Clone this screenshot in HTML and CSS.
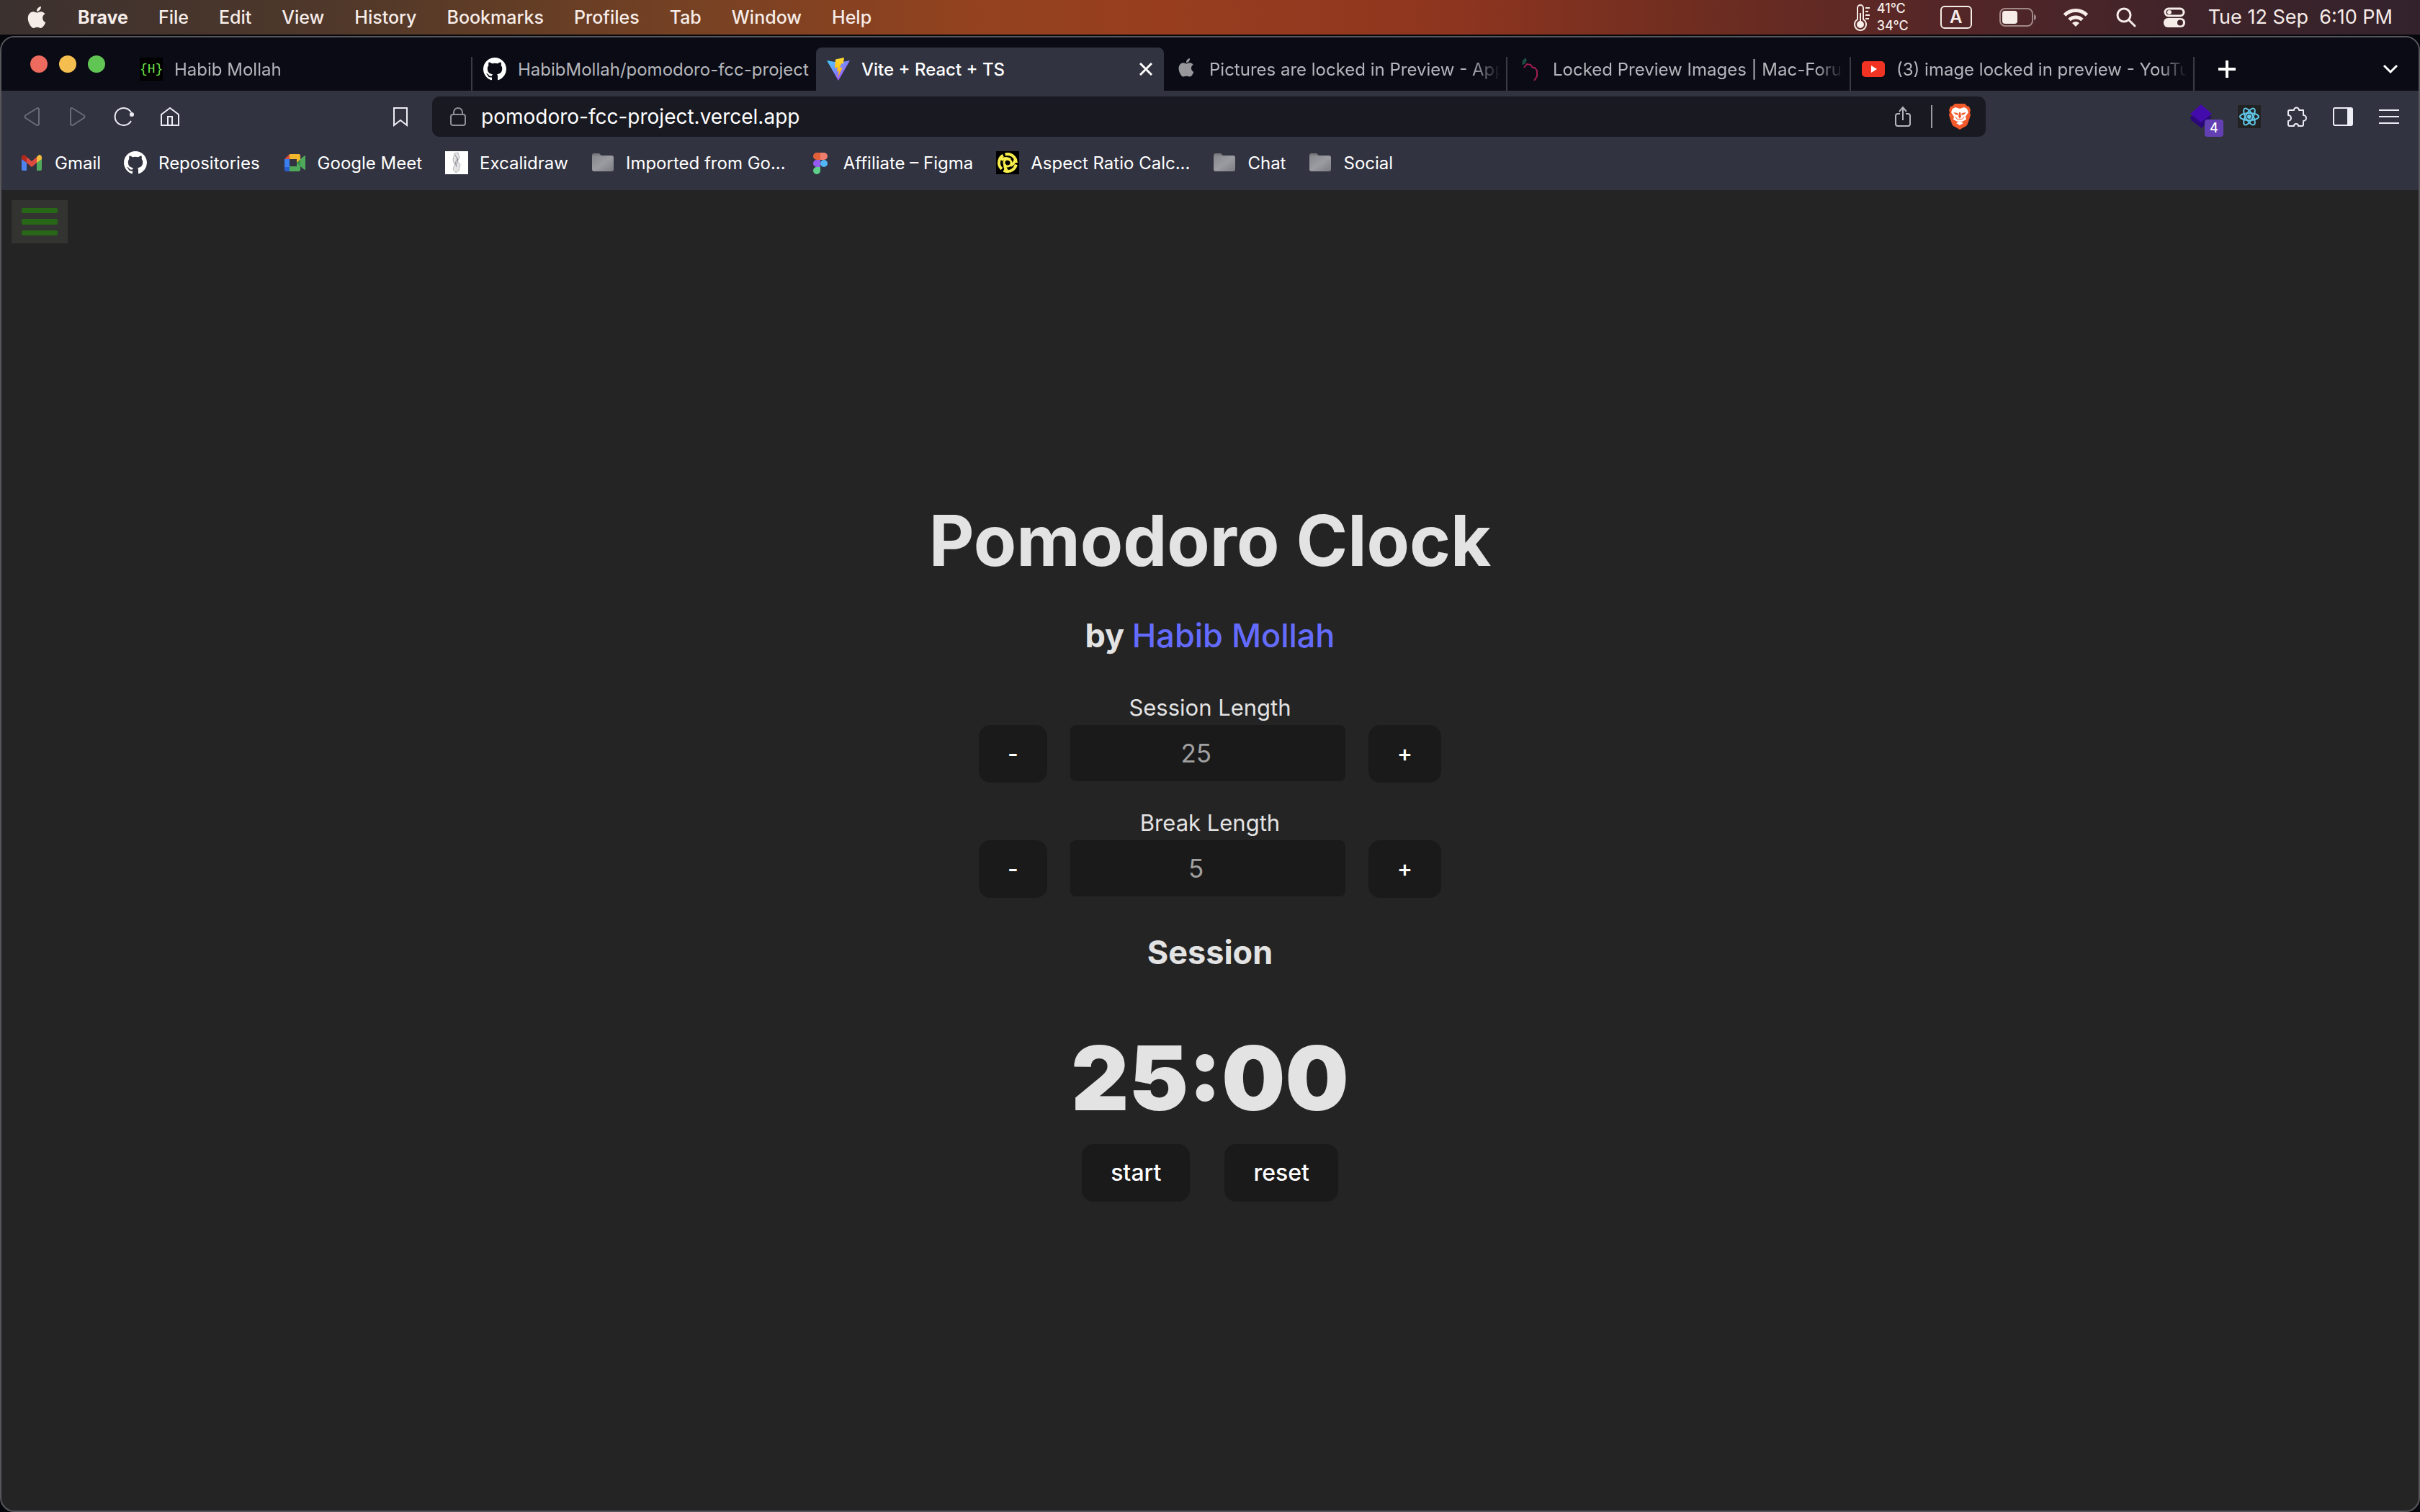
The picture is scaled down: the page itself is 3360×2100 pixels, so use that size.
FILE: index.html
```html
<!DOCTYPE html>
<html lang="en">
<head>
<meta charset="utf-8">
<title>Vite + React + TS</title>
<link rel="stylesheet" href="styles.css">
</head>
<body>
<svg class="sprite" aria-hidden="true">
  <symbol id="apple" viewBox="0 0 24 24"><path fill="currentColor" d="M12.152 6.896c-.948 0-2.415-1.078-3.96-1.04-2.04.027-3.91 1.183-4.961 3.014-2.117 3.675-.546 9.103 1.519 12.09 1.013 1.454 2.208 3.09 3.792 3.039 1.52-.065 2.09-.987 3.935-.987 1.831 0 2.35.987 3.96.948 1.637-.026 2.676-1.48 3.676-2.948 1.156-1.688 1.636-3.325 1.662-3.415-.039-.013-3.182-1.221-3.22-4.857-.026-3.04 2.48-4.494 2.597-4.559-1.429-2.09-3.623-2.324-4.39-2.376-2-.156-3.675 1.09-4.61 1.09zM15.53 3.83c.843-1.012 1.4-2.427 1.245-3.83-1.207.052-2.662.805-3.532 1.818-.78.896-1.454 2.338-1.273 3.714 1.338.104 2.715-.688 3.559-1.701"/></symbol>
  <symbol id="github" viewBox="0 0 16 16"><path fill="#fff" d="M8 0C3.58 0 0 3.58 0 8c0 3.54 2.29 6.53 5.47 7.59.4.07.55-.17.55-.38 0-.19-.01-.82-.01-1.49-2.01.37-2.53-.49-2.69-.94-.09-.23-.48-.94-.82-1.13-.28-.15-.68-.52-.01-.53.63-.01 1.08.58 1.23.82.72 1.21 1.87.87 2.33.66.07-.52.28-.87.51-1.07-1.78-.2-3.64-.89-3.64-3.95 0-.87.31-1.59.82-2.15-.08-.2-.36-1.02.08-2.12 0 0 .67-.21 2.2.82.64-.18 1.32-.27 2-.27.68 0 1.36.09 2 .27 1.53-1.04 2.2-.82 2.2-.82.44 1.1.16 1.92.08 2.12.51.56.82 1.27.82 2.15 0 3.07-1.87 3.75-3.65 3.95.29.25.54.73.54 1.48 0 1.07-.01 1.93-.01 2.2 0 .21.15.46.55.38A8.013 8.013 0 0016 8c0-4.42-3.58-8-8-8z"/></symbol>
  <symbol id="folder" viewBox="0 0 32 32"><path fill="#77797e" d="M1 6a3 3 0 0 1 3-3h7l3 3h12v6H1z"/><rect x="1" y="6" width="30" height="22" rx="3" fill="url(#folderFill)"/></symbol>
  <linearGradient id="folderFill" x1="0" y1="0" x2="1" y2="1"><stop offset="0" stop-color="#85878d"/><stop offset=".5" stop-color="#9a9ca1"/><stop offset="1" stop-color="#7b7d83"/></linearGradient>
  <linearGradient id="viteBody" x1="0" y1="0" x2="1" y2="1"><stop offset="0" stop-color="#41d1ff"/><stop offset="1" stop-color="#bd34fe"/></linearGradient>
  <linearGradient id="viteBolt" x1="0" y1="0" x2="0" y2="1"><stop offset="0" stop-color="#ffdd35"/><stop offset="1" stop-color="#ffa800"/></linearGradient>
</svg>

<header class="menubar">
  <nav class="menus" aria-label="Application menus">
    <button class="menu menu-apple" aria-label="Apple menu"><svg width="30" height="32"><use href="#apple"/></svg></button>
    <button class="menu menu-app">Brave</button>
    <button class="menu">File</button>
    <button class="menu">Edit</button>
    <button class="menu">View</button>
    <button class="menu">History</button>
    <button class="menu">Bookmarks</button>
    <button class="menu">Profiles</button>
    <button class="menu">Tab</button>
    <button class="menu">Window</button>
    <button class="menu">Help</button>
  </nav>
  <div class="status">
    <div class="temps">
      <svg width="24" height="38" viewBox="0 0 24 38" fill="none" stroke="#f6ece8" stroke-width="2"><path d="M5 22V6a4 4 0 0 1 8 0v16a8 8 0 1 1-8 0z"/><circle cx="9" cy="29" r="4" fill="#f6ece8"/><path d="M9 29V13M16 6h6M16 11h4M16 16h6M16 21h5"/></svg>
      <div class="temp-values"><span>41°C</span><span>34°C</span></div>
    </div>
    <span class="input-source">A</span>
    <svg class="battery" width="52" height="26" viewBox="0 0 52 26"><rect x="1" y="1" width="45" height="24" rx="7" fill="none" stroke="#f6ece8" stroke-opacity=".5" stroke-width="2"/><rect x="4" y="4" width="21" height="18" rx="4" fill="#f6ece8"/><path d="M48 9v8q3-1 3-4t-3-4z" fill="#f6ece8" fill-opacity=".5"/></svg>
    <svg class="wifi" width="36" height="28" viewBox="0 0 36 28" fill="none" stroke="#f6ece8" stroke-width="5"><path d="M2.500 11a22 22 0 0 1 31 0"/><path d="M9 17.500a13 13 0 0 1 18 0"/><path d="M18 27l-5-5a7 7 0 0 1 10 0z" fill="#f6ece8" stroke="none"/></svg>
    <svg class="search" width="28" height="28" viewBox="0 0 28 28" fill="none" stroke="#f6ece8" stroke-width="3" stroke-linecap="round"><circle cx="11" cy="11" r="9"/><path d="M18 18l8 8"/></svg>
    <svg class="control" width="30" height="28" viewBox="0 0 30 28"><rect x="2" y="2" width="26" height="10" rx="5" fill="none" stroke="#f6ece8" stroke-width="3"/><circle cx="8" cy="7" r="3" fill="#f6ece8"/><rect x="0" y="15" width="30" height="13" rx="6" fill="#f6ece8"/><circle cx="23" cy="21.500" r="4" fill="#40242a"/></svg>
    <time class="clock">Tue 12 Sep&nbsp; 6:10 PM</time>
  </div>
</header>

<div class="window">
  <div class="tabstrip">
    <div class="lights"><button class="light red" aria-label="Close window"></button><button class="light yellow" aria-label="Minimise"></button><button class="light green" aria-label="Zoom"></button></div>
    <div class="tabs" role="tablist">
      <button class="tab" role="tab"><span class="icon braces">{H}</span><span class="tab-title">Habib Mollah</span></button>
      <button class="tab plain" role="tab"><svg class="icon"><use href="#github"/></svg><span class="tab-title">HabibMollah/pomodoro-fcc-project</span></button>
      <div class="tab active" role="tab" aria-selected="true"><svg class="icon" viewBox="0 0 32 32"><path fill="url(#viteBody)" d="M0 4l16 28L32 4 17 7z"/><path fill="url(#viteBolt)" d="M24 0L12 2.500l-1 12 4-1-1 6 3-1-2 10 7-15-4 1 2-6 3-.5z"/></svg><span class="tab-title">Vite + React + TS</span><button class="tab-close" aria-label="Close tab"><svg width="18" height="18" viewBox="0 0 18 18" stroke="#fff" stroke-width="3"><path d="M1 1l16 16M17 1L1 17"/></svg></button></div>
      <button class="tab" role="tab"><svg class="icon" viewBox="-3 -1 30 30" color="#98989c"><use href="#apple" width="24" height="24"/></svg><span class="tab-title">Pictures are locked in Preview - Apple</span></button>
      <button class="tab" role="tab"><svg class="icon" viewBox="0 0 32 32" fill="none"><path d="M10 0l-4 4-1 6 4-1 3-5z" fill="#1c4a40"/><path d="M8 14l4-5 5 1 3 4h3l3 4v8l-4 6" stroke="#a31e50" stroke-width="2"/></svg><span class="tab-title">Locked Preview Images | Mac-Forums</span></button>
      <button class="tab" role="tab"><svg class="icon" viewBox="0 0 32 32"><rect y="5" width="32" height="22" rx="5" fill="#f03323"/><path d="M13 11v10l8-5z" fill="#fff"/></svg><span class="tab-title">(3) image locked in preview - YouTube</span></button>
    </div>
    <div class="strip-tail">
      <button class="bare" aria-label="New tab"><svg width="26" height="26" viewBox="0 0 26 26" stroke="#fff" stroke-width="4"><path d="M13 1v24M1 13h24"/></svg></button>
      <button class="bare" aria-label="Search tabs"><svg width="22" height="14" viewBox="0 0 22 14" fill="none" stroke="#fff" stroke-width="3"><path d="M2 2l9 9 9-9"/></svg></button>
    </div>
  </div>

  <div class="toolbar">
    <div class="nav">
      <button class="bare" aria-label="Back"><svg width="28" height="28" viewBox="0 0 28 28" fill="none" stroke="#6b6c7a" stroke-width="2" stroke-linejoin="round"><path d="M22 2q2 0 2 2v20q0 2-3 2L5 15.500q-1-1.500 0-3z"/></svg></button>
      <button class="bare" aria-label="Forward"><svg width="28" height="28" viewBox="0 0 28 28" fill="none" stroke="#6b6c7a" stroke-width="2" stroke-linejoin="round"><path d="M6 2q-2 0-2 2v20q0 2 3 2l16-10.500q1-1.500 0-3z"/></svg></button>
      <button class="bare" aria-label="Reload"><svg width="28" height="28" viewBox="0 0 28 28" fill="none" stroke="#ecedf5" stroke-width="2"><path d="M24 20a12 12 0 1 1 0-12"/><circle cx="25" cy="11" r="3" fill="#ecedf5" stroke="none"/></svg></button>
      <button class="bare" aria-label="Home"><svg width="28" height="28" viewBox="0 0 28 28" fill="none" stroke="#ecedf5" stroke-width="2"><path d="M2 11L14 2l12 9v15H2z"/><path d="M11 26V14h6v12"/></svg></button>
    </div>
    <button class="bare" aria-label="Bookmark this page"><svg width="20" height="28" viewBox="0 0 20 28" fill="none" stroke="#ecedf5" stroke-width="2"><path d="M1 2h18v24l-9-7-9 7z"/></svg></button>
    <div class="address">
      <svg width="24" height="28" viewBox="0 0 24 28" fill="none" stroke="#8f9097" stroke-width="2"><rect x="2" y="11" width="20" height="15" rx="3"/><path d="M6 11V8a6 6 0 0 1 12 0v3"/></svg>
      <input class="url" type="text" aria-label="Address" value="pomodoro-fcc-project.vercel.app">
      <button class="bare" aria-label="Share"><svg width="22" height="30" viewBox="0 0 22 30" fill="none" stroke="#b4b5bd" stroke-width="2"><path d="M7 11H4q-3 0-3 3v11q0 3 3 3h14q3 0 3-3V14q0-3-3-3h-3M11 20V3M6 8l5-6 5 6"/></svg></button>
      <span class="divider"></span>
      <button class="bare" aria-label="Brave Shields"><svg width="32" height="36" viewBox="0 0 32 36"><path fill="#f2592b" d="M9 0h14l3 3 3 1 2 5-1 3 1 4-4 12q-1 3-4 4l-7 4-7-4q-3-1-4-4L1 16l1-4-1-3 2-5 3-1z"/><path fill="#fff" d="M16 7l6-2 4 2 2 5-4 6 1 4-6 3-3-1-3 1-6-3 1-4-4-6 2-5 4-2zM11 27l5-3 5 3-5 3z"/><path fill="#f2592b" d="M7 12l6 1 1 3-4-1zM25 12l-6 1-1 3 4-1zM15 12h2l1 6-2 3-2-3z"/><path fill="none" stroke="#f2592b" d="M10 18l2 3 4 1 4-1 2-3"/></svg></button>
    </div>
    <div class="extensions">
      <button class="bare ext" aria-label="Extension, 4 notices"><svg width="30" height="36" viewBox="0 0 30 36"><path fill="#2b0a78" d="M0 18l15-6 15 6-14 16L1 23z"/><path fill="#430bab" d="M15 1l15 13-15 12L0 14z"/></svg><span class="badge">4</span></button>
      <button class="bare" aria-label="React Developer Tools"><svg width="32" height="32" viewBox="0 0 32 32" fill="none" stroke="#61c8ea" stroke-width="2"><rect width="32" height="32" fill="#222" stroke="none"/><ellipse cx="16" cy="16" rx="13" ry="5"/><ellipse cx="16" cy="16" rx="13" ry="5" transform="rotate(60 16 16)"/><ellipse cx="16" cy="16" rx="13" ry="5" transform="rotate(120 16 16)"/><circle cx="16" cy="16" r="3" fill="#61c8ea" stroke="none"/></svg></button>
      <button class="bare" aria-label="Extensions"><svg width="28" height="28" viewBox="0 0 28 28" fill="none" stroke="#ecedf5" stroke-width="2" stroke-linejoin="round"><path d="M4 5h6a3.500 3.500 0 0 1 7 0h6v7a3.500 3.500 0 0 1 0 8v5q0 2-2 2h-5a3 3 0 0 0-6 0H4q-2 0-2-2v-5a4 4 0 0 0 0-8V7q0-2 2-2z"/></svg></button>
      <button class="bare" aria-label="Sidebar"><svg width="28" height="26" viewBox="0 0 28 26"><rect x="1" y="1" width="26" height="24" rx="2" fill="none" stroke="#ecedf5" stroke-width="2"/><path fill="#ecedf5" d="M20 1h7v24h-7z"/></svg></button>
      <button class="bare" aria-label="Menu"><svg width="28" height="22" viewBox="0 0 28 22" stroke="#ecedf5" stroke-width="2"><path d="M0 2h28M0 11h28M0 20h28"/></svg></button>
    </div>
  </div>

  <nav class="bookmarks" aria-label="Bookmarks">
    <a class="bookmark" href="#"><svg class="icon" viewBox="0 0 32 32"><path fill="#4e83ee" d="M2 10l7 5v12H4q-2 0-2-2z"/><path fill="#4fa95b" d="M30 10l-7 5v12h5q2 0 2-2z"/><path fill="#dd4b3e" d="M9 8l7 6 7-6v8l-7 6-7-6z"/><path fill="#b5281c" d="M2 9q0-4 4-4l3 3v8l-7-5z"/><path fill="#f1bb3d" d="M30 9q0-4-4-4l-3 3v8l7-5z"/></svg>Gmail</a>
    <a class="bookmark" href="#"><svg class="icon"><use href="#github"/></svg>Repositories</a>
    <a class="bookmark" href="#"><svg class="icon" viewBox="0 0 32 32"><path fill="#dd4b3e" d="M9 4v7H2z"/><path fill="#3c7df0" d="M2 11h7v11H2z"/><path fill="#2a5ed0" d="M2 22h7v6H4q-2 0-2-2z"/><path fill="#f1b62e" d="M9 4h13q2 0 2 2v7l-5 3v-5H9z"/><path fill="#4fa95b" d="M9 21h10v-5l5 3v7q0 2-2 2H9z"/><path fill="#3a8a48" d="M19 16l5-5v10z"/><path fill="#4fa95b" d="M24 11l6-5q1 0 1 1v18q0 1-1 1l-6-5z"/></svg>Google Meet</a>
    <a class="bookmark" href="#"><svg class="icon" viewBox="0 0 32 32"><path fill="#fff" d="M0 0h32v32H0z"/><path fill="#e4e4e6" stroke="#b5b5b8" d="M13 3l5-1 2 7-3 5 4 5-2 8-4 3-4-5 2-6-2-7z"/><path stroke="#8c8c90" fill="none" d="M14 5l4 8-3 6M18 9l-4 7 2 6"/></svg>Excalidraw</a>
    <a class="bookmark" href="#"><svg class="icon"><use href="#folder"/></svg>Imported from Go...</a>
    <a class="bookmark" href="#"><svg class="icon" viewBox="0 0 32 32"><path fill="#e0603a" d="M16 2h-5a5 5 0 0 0 0 10h5z"/><path fill="#ef7d6d" d="M16 2h5a5 5 0 0 1 0 10h-5z"/><path fill="#945cf0" d="M16 12h-5a5 5 0 0 0 0 10h5z"/><circle cx="21" cy="17" r="5" fill="#52b5f5"/><path fill="#5fd08c" d="M16 22h-5a5 5 0 1 0 5 5z"/></svg>Affiliate – Figma</a>
    <a class="bookmark" href="#"><svg class="icon" viewBox="0 0 32 32"><path d="M0 0h32v32H0z"/><g fill="none" stroke="#f7ee4b" stroke-width="5"><circle cx="16" cy="16" r="12" stroke-width="4" stroke-dasharray="22 3.130" transform="rotate(12 16 16)"/><circle cx="16" cy="16" r="5" stroke-width="3"/><path stroke-width="4" d="M20 12q-7-4-13 0M20 20q6-3 7-10M12 18q0 7 5 11"/></g></svg>Aspect Ratio Calc...</a>
    <a class="bookmark" href="#"><svg class="icon"><use href="#folder"/></svg>Chat</a>
    <a class="bookmark" href="#"><svg class="icon"><use href="#folder"/></svg>Social</a>
  </nav>

  <div class="page">
    <button class="hamburger" aria-label="Open menu"><span></span><span></span><span></span></button>
    <main class="pomodoro">
      <h1 class="title">Pomodoro Clock</h1>
      <h2 class="author">by <a href="#">Habib Mollah</a></h2>
      <div class="setting">
        <label for="session">Session Length</label>
        <div class="stepper"><button class="btn">-</button><input id="session" class="length" type="number" value="25"><button class="btn">+</button></div>
      </div>
      <div class="setting">
        <label for="break">Break Length</label>
        <div class="stepper"><button class="btn">-</button><input id="break" class="length" type="number" value="5"><button class="btn">+</button></div>
      </div>
      <h2 class="phase">Session</h2>
      <div class="timer">25:00</div>
      <div class="actions"><button class="btn">start</button><button class="btn">reset</button></div>
    </main>
  </div>
</div>
</body>
</html>
```
FILE: styles.css
```css
* { box-sizing: border-box; }

body {
  margin: 0;
  min-height: 100vh;
  display: flex;
  flex-direction: column;
  background: #06070d;
  color: #fff;
  font-family: Inter, "Liberation Sans", sans-serif;
  font-size: 24px;
}

button, input { font: inherit; color: inherit; border: 0; margin: 0; }
button { background: none; padding: 0; }
a { color: inherit; text-decoration: none; }
svg { display: block; flex: none; }
.sprite { position: absolute; width: 0; height: 0; }
.bare { display: flex; align-items: center; justify-content: center; }
.icon { width: 32px; height: 32px; flex: none; }

/* macOS menu bar */
.menubar {
  height: 48px;
  margin-bottom: 2px;
  padding: 0 38px 0 36px;
  display: flex;
  justify-content: space-between;
  align-items: center;
  font-size: 25px;
  line-height: 32px;
  color: #f6ece8;
  background: linear-gradient(90deg, #3b312f, #50382a 14%, #5f3c26 20%, #7a4223 30%, #93421f 40%, #983e1f 48%, #8e351f 60%, #6f2d20 70%, #552627 80%, #40242a 90%, #33222c);
}
.menus { display: flex; align-items: center; gap: 42px; }
.menu { font-weight: 500; }
.menu-app { font-weight: 700; }
.status { display: flex; align-items: center; }
.temps { display: flex; align-items: center; gap: 8px; margin-right: 44px; }
.temp-values { display: flex; flex-direction: column; font-size: 18px; line-height: 24px; font-weight: 500; }
.input-source {
  width: 44px;
  height: 32px;
  margin-right: 38px;
  border: 2px solid #f6ece8;
  border-radius: 6px;
  font-size: 24px;
  line-height: 28px;
  font-weight: 600;
  text-align: center;
}
.battery { margin-right: 36px; }
.wifi { margin-right: 38px; }
.search { margin-right: 38px; }
.control { margin-right: 32px; }
.clock { font-size: 27px; }

/* Browser window */
.window {
  flex: 1;
  display: flex;
  flex-direction: column;
  overflow: hidden;
  border: 2px solid #57575b;
  border-radius: 20px;
  background: #242424;
}
.tabstrip { display: flex; height: 74px; background: #0a0b15; }
.lights { display: flex; gap: 16px; padding: 25px 33px 0 40px; }
.light { width: 24px; height: 24px; border-radius: 50%; }
.red { background: #ec6a5e; }
.yellow { background: #f4bf4f; }
.green { background: #61c554; }
.tabs { flex: 1; min-width: 0; display: flex; padding-top: 14px; }
.tab {
  flex: 1 1 0;
  min-width: 0;
  display: flex;
  align-items: center;
  gap: 16px;
  padding: 0 8px 0 15px;
  color: #b5b6bb;
  text-align: left;
  border-right: 2px solid transparent;
  border-image: linear-gradient(transparent 14px, #3a3b44 14px) 1;
  border-width: 0 2px 0 0;
}
.tab.plain { border-image: none; }
.tab.active {
  padding-right: 16px;
  border: 0;
  border-radius: 8px 8px 0 0;
  background: #323340;
  color: #fff;
  font-weight: 500;
}
.tab-title {
  flex: 1;
  min-width: 0;
  overflow: hidden;
  white-space: nowrap;
  -webkit-mask-image: linear-gradient(90deg, #000 calc(100% - 40px), transparent);
  mask-image: linear-gradient(90deg, #000 calc(100% - 40px), transparent);
}
.plain .tab-title, .active .tab-title { -webkit-mask-image: none; mask-image: none; }
.tab-close { padding: 0; }
.braces {
  background: #000;
  color: #6be34c;
  font-family: "Liberation Mono", monospace;
  font-size: 18px;
  line-height: 32px;
  text-align: center;
}
.strip-tail { width: 311px; display: flex; justify-content: space-between; padding: 14px 28px 0 32px; }

.toolbar {
  display: flex;
  align-items: center;
  height: 72px;
  padding: 0 27px 0 28px;
  background: #323340;
}
.nav { display: flex; gap: 36px; margin-right: 296px; }
.address {
  flex: 1;
  min-width: 0;
  height: 56px;
  margin: 0 284px 0 34px;
  padding: 0 20px 0 24px;
  display: flex;
  align-items: center;
  border-radius: 10px;
  background: #191922;
}
.url { flex: 1; min-width: 0; padding: 0 0 0 20px; background: none; font-size: 28px; }
.divider { width: 2px; height: 32px; margin: 0 22px 0 28px; background: #9a9ba2; }
.extensions { display: flex; gap: 36px; align-items: center; }
.ext { position: relative; }
.badge {
  position: absolute;
  left: 20px;
  bottom: -10px;
  width: 26px;
  height: 24px;
  border-radius: 4px;
  background: #6240b4;
  color: #fff;
  font-size: 18px;
  line-height: 24px;
  font-weight: 500;
}

.bookmarks {
  display: flex;
  gap: 32px;
  height: 66px;
  padding: 0 26px 10px;
  align-items: center;
  background: #323340;
}
.bookmark { display: flex; align-items: center; gap: 16px; white-space: nowrap; }

/* Page */
.page { flex: 1; position: relative; display: flex; flex-direction: column; color: #e3e3e3; }
.hamburger {
  position: absolute;
  left: 14px;
  top: 14px;
  width: 78px;
  height: 60px;
  padding: 11px 14px;
  display: flex;
  flex-direction: column;
  gap: 8px;
  background: #333331;
}
.hamburger span { width: 50px; height: 8px; border-radius: 2px; background: #286718; }

.pomodoro {
  flex: 1;
  display: flex;
  flex-direction: column;
  align-items: center;
  justify-content: center;
  font-size: 32px;
  line-height: 48px;
}
.title { margin: 0 0 38px; font-size: 97px; line-height: 116px; font-weight: 700; }
.author { margin: 0 0 40px; font-size: 45px; line-height: 72px; font-weight: 700; }
.author a { color: #646cff; font-weight: 500; }
.setting { margin-bottom: 32px; display: flex; flex-direction: column; align-items: center; }
.setting label { font-size: 31px; }
.stepper { display: flex; gap: 32px; }
.btn {
  height: 80px;
  padding: 0 40px;
  border-radius: 16px;
  background: #1a1a1a;
  color: #fff;
  font-weight: 500;
}
.length {
  width: 382px;
  height: 78px;
  padding: 0 32px 0 0;
  border-radius: 8px;
  background: #1a1a1a;
  color: #a0a0a0;
  font-size: 35px;
  text-align: center;
  appearance: textfield;
}
.length::-webkit-inner-spin-button { display: none; }
.phase { margin: 8px 0 66px; font-size: 45px; line-height: 72px; font-weight: 700; }
.timer { margin-bottom: 20px; font-size: 124px; line-height: 144px; font-weight: 900; }
.actions { display: flex; gap: 48px; }
```
